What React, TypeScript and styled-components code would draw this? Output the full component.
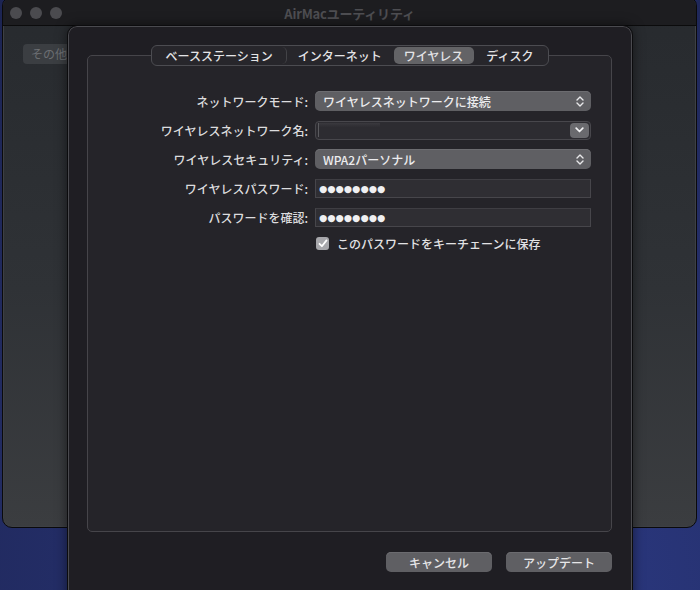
import styled, { createGlobalStyle } from 'styled-components'

const GlobalStyle = createGlobalStyle`
  html, body {
    margin: 0;
    padding: 0;
    background: #232c62;
  }
  * {
    box-sizing: border-box;
  }
`

const jp = `"Noto Sans CJK JP", "Noto Sans", sans-serif`

const Desktop = styled.div`
  position: relative;
  width: 700px;
  height: 590px;
  overflow: hidden;
  background: radial-gradient(circle at 70% 100%, #2c3a85 0%, #242e68 50%, #1c2452 100%);
  font-family: ${jp};
`

const BackWindow = styled.div`
  position: absolute;
  left: 2px;
  top: -4px;
  width: 695px;
  height: 532px;
  border-radius: 10px;
  border: 1px solid #0a0a0c;
  box-shadow: inset 0 0 0 1px #3e4044;
  overflow: hidden;
  display: flex;
  flex-direction: column;
  background: linear-gradient(180deg, #272a2e 0%, #2f3236 55%, #3b3d40 100%);
`

const TitleBar = styled.div`
  height: 29px;
  padding-top: 4px;
  flex-shrink: 0;
  display: flex;
  align-items: center;
  justify-content: center;
  position: relative;
  background: #1d1d20;
  border-bottom: 1px solid #0b0b0c;
`

const Lights = styled.div`
  position: absolute;
  left: 7px;
  top: 10px;
  display: flex;
  gap: 8px;
`

const Light = styled.span`
  width: 12px;
  height: 12px;
  border-radius: 50%;
  background: #4b4b4f;
`

const Title = styled.div`
  font-size: 13px;
  font-weight: 700;
  color: #4e4e52;
  letter-spacing: -0.2px;
`

const BackBody = styled.div`
  padding: 18px 20px;
`

const OtherButton = styled.div`
  width: 60px;
  height: 20px;
  border-radius: 4px;
  background: #3b3e42;
  color: #6c6e72;
  font-size: 12px;
  line-height: 20px;
  padding-left: 8px;
`

const Sheet = styled.div`
  position: absolute;
  left: 67px;
  top: 25px;
  width: 566px;
  height: 580px;
  border-radius: 10px 10px 0 0;
  background: #1f1e23;
  border: 1px solid #0c0c0e;
  box-shadow: inset 0 0 0 1px #4a4a4f, 0 0 12px rgba(0, 0, 0, 0.5);
  padding: 29px 20px 0 19px;
  display: flex;
  flex-direction: column;
`

const Panel = styled.div`
  height: 477px;
  border: 1px solid #46454a;
  border-radius: 5px;
  background: #252429;
  display: flex;
  flex-direction: column;
  align-items: center;
`

const Tabs = styled.div`
  margin-top: -11px;
  height: 21px;
  display: flex;
  align-items: center;
  padding: 0 1px;
  border: 1px solid #4c4c51;
  border-radius: 6px;
  background: #27262b;
`

const Tab = styled.div<{ pad: number; active?: boolean; divider?: boolean }>`
  height: 17px;
  padding: 0 ${(p) => p.pad}px;
  display: flex;
  align-items: center;
  font-size: 12px;
  font-weight: 500;
  color: #e4e4e6;
  border-radius: 5px;
  background: ${(p) => (p.active ? '#636366' : 'transparent')};
  border-right: ${(p) => (p.divider ? '1px solid #434347' : '1px solid transparent')};
`

const Form = styled.div`
  align-self: stretch;
  margin-top: 25px;
  display: grid;
  grid-template-columns: 220px 276px;
  grid-template-rows: 20px 18px 20px 19px 19px 13px;
  column-gap: 7px;
  row-gap: 10px;
  align-items: center;
`

const Label = styled.div`
  font-size: 12px;
  font-weight: 500;
  color: #dcdcde;
  text-align: right;
  white-space: nowrap;
`

const Popup = styled.div`
  height: 20px;
  border-radius: 5px;
  background: #5f5f63;
  box-shadow: inset 0 1px 0 #6c6c70;
  display: flex;
  align-items: center;
  justify-content: space-between;
  padding: 0 7px 0 8px;
  font-size: 12px;
  font-weight: 500;
  color: #ececee;
`

const Combo = styled.div`
  height: 19px;
  border-radius: 4px;
  background: #2d2c31;
  border: 1px solid #48474c;
  display: flex;
  align-items: center;
  justify-content: space-between;
  padding: 0 1px 0 2px;
`

const Redacted = styled.div`
  width: 62px;
  height: 14px;
  background: linear-gradient(180deg, #3a393e 0%, #2d2c31 30%);
  border-left: 1px solid #5a5a5e;
`

const ComboButton = styled.div`
  width: 19px;
  height: 15px;
  border-radius: 4px;
  background: #6a6a6e;
  display: flex;
  align-items: center;
  justify-content: center;
`

const Field = styled.div`
  height: 19px;
  background: #2f2e33;
  border: 1px solid #47464b;
  border-top-color: #3f3e43;
  display: flex;
  align-items: center;
  padding-left: 3px;
  font-family: "DejaVu Sans", sans-serif;
  font-size: 9.4px;
  color: #f0f0f2;
  letter-spacing: 0.1px;
`

const CheckRow = styled.div`
  grid-column: 2;
  display: flex;
  align-items: center;
  gap: 8px;
  padding-left: 1px;
  font-size: 12px;
  font-weight: 500;
  color: #e2e2e4;
`

const CheckBox = styled.span`
  width: 13px;
  height: 13px;
  border-radius: 3px;
  background: #a7a7ab;
  display: flex;
  align-items: center;
  justify-content: center;
`

const Footer = styled.div`
  margin-top: 20px;
  display: flex;
  justify-content: flex-end;
  gap: 14px;
`

const Button = styled.div`
  width: 106px;
  height: 20px;
  border-radius: 5px;
  background: #5f5f63;
  box-shadow: inset 0 1px 0 #6b6b6f;
  display: flex;
  align-items: center;
  justify-content: center;
  font-size: 12px;
  font-weight: 500;
  color: #e6e6e8;
`

const UpDown = () => (
  <svg width="8" height="11" viewBox="0 0 8 11" fill="none" stroke="#e8e8ea" strokeWidth="1.4" strokeLinecap="round" strokeLinejoin="round">
    <path d="M1 4 L4 1 L7 4" />
    <path d="M1 7 L4 10 L7 7" />
  </svg>
)

const ChevronDown = () => (
  <svg width="9" height="6" viewBox="0 0 9 6" fill="none" stroke="#f2f2f4" strokeWidth="1.7" strokeLinecap="round" strokeLinejoin="round">
    <path d="M1.2 1.2 L4.5 4.5 L7.8 1.2" />
  </svg>
)

const Check = () => (
  <svg width="10" height="9" viewBox="0 0 10 9" fill="none" stroke="#ffffff" strokeWidth="1.8" strokeLinecap="round" strokeLinejoin="round">
    <path d="M1.5 4.8 L3.9 7.2 L8.5 1.4" />
  </svg>
)

const tabs = [
  { name: 'ベースステーション', pad: 13, divider: true },
  { name: 'インターネット', pad: 11 },
  { name: 'ワイヤレス', pad: 10, active: true },
  { name: 'ディスク', pad: 12 },
]

export default function App() {
  return (
    <>
      <GlobalStyle />
      <Desktop>
        <BackWindow>
          <TitleBar>
            <Lights>
              <Light />
              <Light />
              <Light />
            </Lights>
            <Title>AirMacユーティリティ</Title>
          </TitleBar>
          <BackBody>
            <OtherButton>その他</OtherButton>
          </BackBody>
        </BackWindow>

        <Sheet>
          <Panel>
            <Tabs>
              {tabs.map((t) => (
                <Tab key={t.name} pad={t.pad} active={t.active} divider={t.divider}>
                  {t.name}
                </Tab>
              ))}
            </Tabs>
            <Form>
              <Label>ネットワークモード:</Label>
              <Popup>
                <span>ワイヤレスネットワークに接続</span>
                <UpDown />
              </Popup>

              <Label>ワイヤレスネットワーク名:</Label>
              <Combo>
                <Redacted />
                <ComboButton>
                  <ChevronDown />
                </ComboButton>
              </Combo>

              <Label>ワイヤレスセキュリティ:</Label>
              <Popup>
                <span>WPA2パーソナル</span>
                <UpDown />
              </Popup>

              <Label>ワイヤレスパスワード:</Label>
              <Field>●●●●●●●●</Field>

              <Label>パスワードを確認:</Label>
              <Field>●●●●●●●●</Field>

              <CheckRow>
                <CheckBox>
                  <Check />
                </CheckBox>
                このパスワードをキーチェーンに保存
              </CheckRow>
            </Form>
          </Panel>
          <Footer>
            <Button>キャンセル</Button>
            <Button>アップデート</Button>
          </Footer>
        </Sheet>
      </Desktop>
    </>
  )
}
